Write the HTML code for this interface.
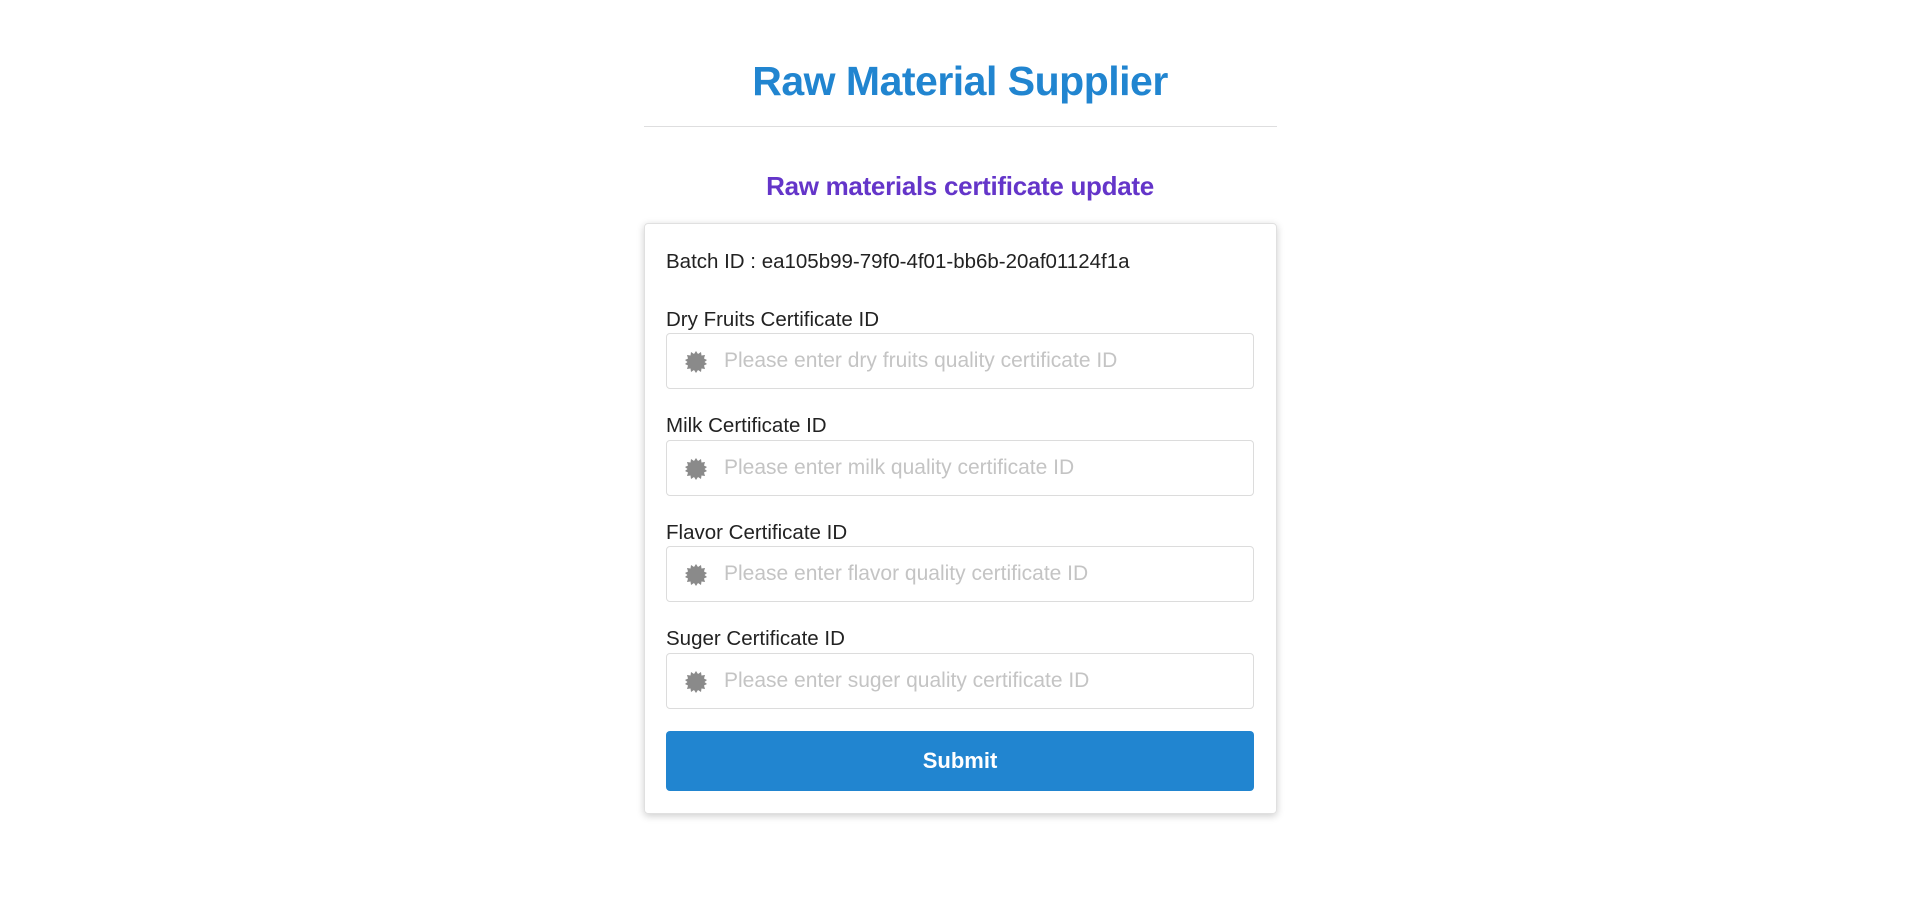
<!DOCTYPE html>
<html><head><meta charset="utf-8"><style>
*{box-sizing:border-box;margin:0;padding:0}
body{width:1920px;height:913px;background:#fff;font-family:"Liberation Sans",sans-serif;color:rgba(0,0,0,.87);position:relative;overflow:hidden}
.t{position:absolute;left:0;width:1920px;text-align:center;font-weight:bold}
hr{position:absolute;left:644px;width:633px;top:126px;border:0;border-top:1px solid #dededf}
.card{position:absolute;left:644px;top:223px;width:633px;height:591px;border:1px solid #e0e0e0;border-radius:4px;box-shadow:0 2px 8px rgba(0,0,0,.2)}
.a{position:absolute;left:666px;font-size:20.5px;color:#222}
.in{position:absolute;left:666px;width:588px;height:56px;border:1px solid #dcdcdc;border-radius:4px}
.in svg{position:absolute;left:18px;top:17px}
.in span{position:absolute;left:57px;top:15px;font-size:21px;color:#c4c4c4}
.btn{position:absolute;left:666px;top:731px;width:588px;height:60px;background:#2185d0;border-radius:4px;color:#fff;font-weight:bold;font-size:22px;text-align:center;line-height:60px}
</style></head><body>
<div class="t" style="top:58px;font-size:41px;color:#2185d0;letter-spacing:-0.5px">Raw Material Supplier</div>
<hr>
<div class="t" style="top:171px;font-size:26px;color:#6435c9;letter-spacing:-0.3px">Raw materials certificate update</div>
<div class="card"></div>
<div class="a" style="top:250px">Batch ID : ea105b99-79f0-4f01-bb6b-20af01124f1a</div>
<div class="a" style="top:308px">Dry Fruits Certificate ID</div>
<div class="in" style="top:333px"><svg width="22" height="22" viewBox="0 0 22 22"><polygon fill="#8a8a8a" points="11,0 13,3 16,1 16.5,4.5 20,4 19,7.5 22,9 19.5,11 22,13 19,14.5 20,18 16.5,17.5 16,21 13,19 11,22 9,19 6,21 5.5,17.5 2,18 3,14.5 0,13 2.5,11 0,9 3,7.5 2,4 5.5,4.5 6,1 9,3"/></svg><span>Please enter dry fruits quality certificate ID</span></div>
<div class="a" style="top:414px">Milk Certificate ID</div>
<div class="in" style="top:440px"><svg width="22" height="22" viewBox="0 0 22 22"><polygon fill="#8a8a8a" points="11,0 13,3 16,1 16.5,4.5 20,4 19,7.5 22,9 19.5,11 22,13 19,14.5 20,18 16.5,17.5 16,21 13,19 11,22 9,19 6,21 5.5,17.5 2,18 3,14.5 0,13 2.5,11 0,9 3,7.5 2,4 5.5,4.5 6,1 9,3"/></svg><span>Please enter milk quality certificate ID</span></div>
<div class="a" style="top:521px">Flavor Certificate ID</div>
<div class="in" style="top:546px"><svg width="22" height="22" viewBox="0 0 22 22"><polygon fill="#8a8a8a" points="11,0 13,3 16,1 16.5,4.5 20,4 19,7.5 22,9 19.5,11 22,13 19,14.5 20,18 16.5,17.5 16,21 13,19 11,22 9,19 6,21 5.5,17.5 2,18 3,14.5 0,13 2.5,11 0,9 3,7.5 2,4 5.5,4.5 6,1 9,3"/></svg><span>Please enter flavor quality certificate ID</span></div>
<div class="a" style="top:627px">Suger Certificate ID</div>
<div class="in" style="top:653px"><svg width="22" height="22" viewBox="0 0 22 22"><polygon fill="#8a8a8a" points="11,0 13,3 16,1 16.5,4.5 20,4 19,7.5 22,9 19.5,11 22,13 19,14.5 20,18 16.5,17.5 16,21 13,19 11,22 9,19 6,21 5.5,17.5 2,18 3,14.5 0,13 2.5,11 0,9 3,7.5 2,4 5.5,4.5 6,1 9,3"/></svg><span>Please enter suger quality certificate ID</span></div>
<div class="btn">Submit</div>
</body></html>
